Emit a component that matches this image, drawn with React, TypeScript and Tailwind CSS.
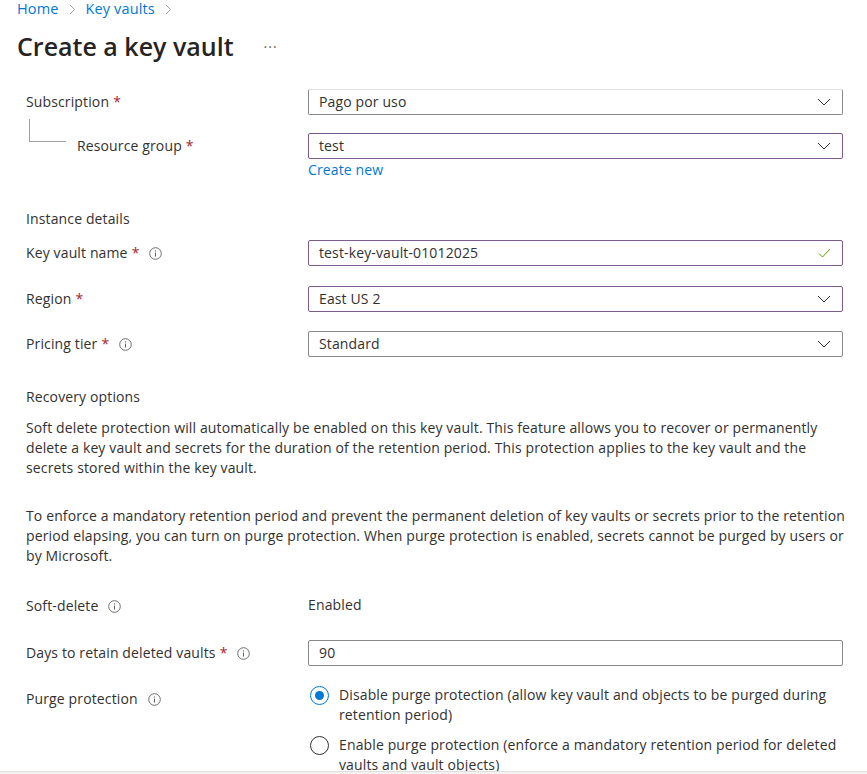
import React from 'react';

const font = { fontFamily: '"Open Sans", "Noto Sans", sans-serif' };

const Star = () => <span className="text-[#a4262c] ml-[4px]">*</span>;

const Info = () => (
  <svg width="13" height="13" viewBox="0 0 13 13" className="ml-[10px] shrink-0">
    <circle cx="6.5" cy="6.5" r="5.8" fill="none" stroke="#605e5c" strokeWidth="0.9" />
    <line x1="6.5" y1="5.6" x2="6.5" y2="9.6" stroke="#605e5c" strokeWidth="1" />
    <circle cx="6.5" cy="3.9" r="0.6" fill="#605e5c" />
  </svg>
);

const Chevron = () => (
  <svg width="14" height="8" viewBox="0 0 14 8" className="shrink-0">
    <path d="M1 1 L7 7 L13 1" fill="none" stroke="#323130" strokeWidth="1" />
  </svg>
);

const Check = () => (
  <svg width="13" height="10" viewBox="0 0 13 10" className="shrink-0">
    <path d="M1 5.5 L4.5 9 L12 1" fill="none" stroke="#57a300" strokeWidth="1" />
  </svg>
);

const Crumb = () => (
  <svg width="7" height="11" viewBox="0 0 7 11" className="mx-[10px] shrink-0">
    <path d="M1 1 L5.5 5.5 L1 10" fill="none" stroke="#a19f9d" strokeWidth="1" />
  </svg>
);

type FieldProps = { value: string; purple?: boolean; icon?: 'chevron' | 'check' | 'none'; noTop?: boolean };

const Field = ({ value, purple, icon = 'chevron', noTop }: FieldProps) => (
  <div
    className={`flex-1 h-[26px] flex items-center justify-between pl-[10px] pr-[11px] rounded-[2px] border ${
      purple ? 'border-[#7e5c8f]' : 'border-[#8a8886]'
    } ${noTop ? 'border-t-[#e1dfdd]' : ''}`}
  >
    <span className="text-[14px] text-[#323130]">{value}</span>
    {icon === 'chevron' && <Chevron />}
    {icon === 'check' && <Check />}
  </div>
);

const Label = ({ children }: { children: React.ReactNode }) => (
  <div className="w-[282px] flex items-center text-[14px] text-[#323130]">{children}</div>
);

const Radio = ({ checked }: { checked?: boolean }) => (
  <div
    className={`w-[19px] h-[19px] rounded-full border flex items-center justify-center shrink-0 ${
      checked ? 'border-[#0078d4]' : 'border-[#323130]'
    }`}
  >
    {checked && <div className="w-[9px] h-[9px] rounded-full bg-[#0078d4]" />}
  </div>
);

export default function App() {
  return (
    <div className="relative w-[867px] h-[774px] bg-white overflow-hidden text-[#323130] tracking-[0.13px]" style={font}>
      <div className="pl-[17px] pt-[1px] h-[17px] flex items-center text-[14.5px] text-[#0078d4] leading-[16px]">
        <span>Home</span>
        <Crumb />
        <span>Key vaults</span>
        <Crumb />
      </div>

      <div className="pl-[17px] mt-[13px] h-[32px] flex items-center">
        <h1 className="text-[25px] font-semibold leading-[32px] text-[#252423] tracking-[0px]">Create a key vault</h1>
        <span className="ml-[30px] text-[14px] text-[#605e5c] tracking-[1px]">···</span>
      </div>

      <div className="pl-[26px] pr-[24px] text-[14px] leading-[20px]">
        <div className="mt-[27px] flex h-[26px]">
          <Label>
            Subscription
            <Star />
          </Label>
          <Field value="Pago por uso" noTop />
        </div>

        <div className="mt-[18px] flex h-[26px]">
          <Label>
            <div className="ml-[3px] w-[37px] h-[23px] -mt-[14px] border-l border-b border-[#a19f9d] shrink-0 self-start" />
            <span className="ml-[11px]">Resource group</span>
            <Star />
          </Label>
          <Field value="test" purple />
        </div>

        <div className="mt-[1px] pl-[282px] h-[20px] text-[#0078d4]">Create new</div>

        <div className="mt-[29px] h-[20px]">Instance details</div>

        <div className="mt-[11px] flex h-[26px]">
          <Label>
            Key vault name
            <Star />
            <Info />
          </Label>
          <Field value="test-key-vault-01012025" purple icon="check" />
        </div>

        <div className="mt-[20px] flex h-[26px]">
          <Label>
            Region
            <Star />
          </Label>
          <Field value="East US 2" purple />
        </div>

        <div className="mt-[19px] flex h-[26px]">
          <Label>
            Pricing tier
            <Star />
            <Info />
          </Label>
          <Field value="Standard" />
        </div>

        <div className="mt-[30px] h-[20px]">Recovery options</div>

        <p className="mt-[11px] whitespace-nowrap">
          Soft delete protection will automatically be enabled on this key vault. This feature allows you to recover or permanently
          <br />
          delete a key vault and secrets for the duration of the retention period. This protection applies to the key vault and the
          <br />
          secrets stored within the key vault.
        </p>

        <p className="mt-[28px] whitespace-nowrap">
          To enforce a mandatory retention period and prevent the permanent deletion of key vaults or secrets prior to the retention
          <br />
          period elapsing, you can turn on purge protection. When purge protection is enabled, secrets cannot be purged by users or
          <br />
          by Microsoft.
        </p>

        <div className="mt-[27px] flex h-[26px]">
          <Label>
            Soft-delete
            <Info />
          </Label>
          <div className="flex items-center -mt-[2px]">Enabled</div>
        </div>

        <div className="mt-[21px] flex h-[26px]">
          <Label>
            Days to retain deleted vaults
            <Star />
            <Info />
          </Label>
          <Field value="90" icon="none" />
        </div>

        <div className="mt-[19px] flex">
          <div className="w-[282px] mt-[4px] h-[20px] flex items-center">
            Purge protection
            <Info />
          </div>
          <div className="flex flex-col gap-[10px]">
            <div className="flex items-start">
              <div className="mt-[1px] ml-[2px]">
                <Radio checked />
              </div>
              <div className="ml-[10px] whitespace-nowrap">
                Disable purge protection (allow key vault and objects to be purged during
                <br />
                retention period)
              </div>
            </div>
            <div className="flex items-start">
              <div className="mt-[1px] ml-[2px]">
                <Radio />
              </div>
              <div className="ml-[10px] whitespace-nowrap">
                Enable purge protection (enforce a mandatory retention period for deleted
                <br />
                vaults and vault objects)
              </div>
            </div>
          </div>
        </div>
      </div>

      <div className="absolute left-0 right-0 bottom-0 h-[3px] bg-[#f3f2f1] border-t border-[#e1dfdd]" />
    </div>
  );
}
